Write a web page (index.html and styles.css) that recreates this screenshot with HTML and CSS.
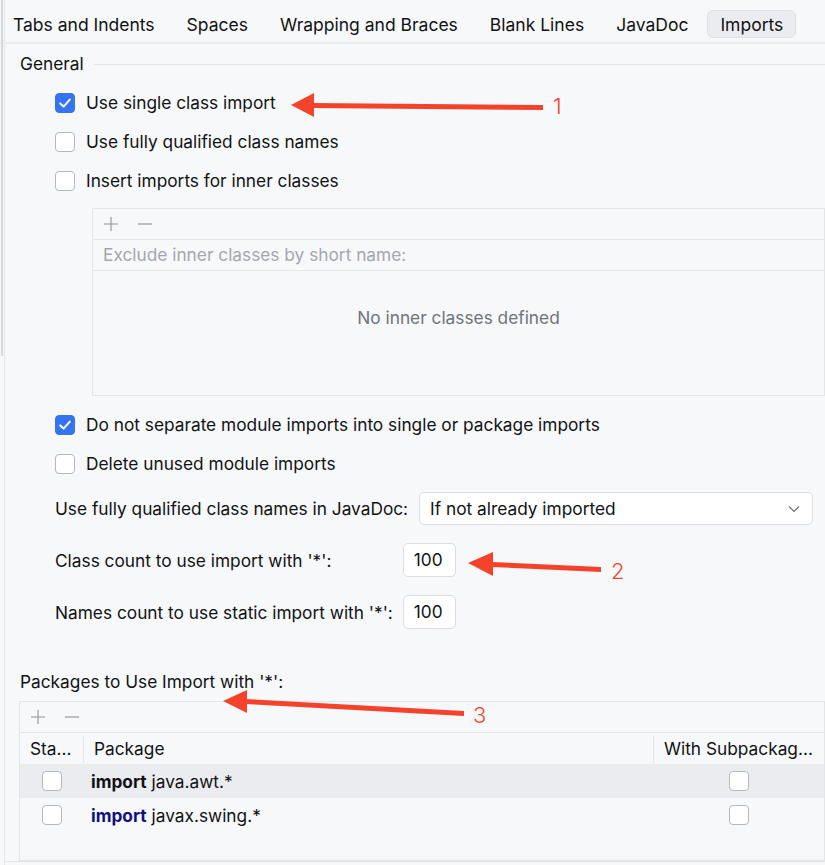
FILE: index.html
```html
<!DOCTYPE html>
<html lang="en">
<head>
<meta charset="utf-8">
<title>Imports</title>
<link rel="stylesheet" href="styles.css">
</head>
<body>
<div class="scroll-thumb"></div>
<div class="frame">
  <nav class="tabs">
    <span class="tab">Tabs and Indents</span>
    <span class="tab">Spaces</span>
    <span class="tab">Wrapping and Braces</span>
    <span class="tab">Blank Lines</span>
    <span class="tab">JavaDoc</span>
    <span class="tab active">Imports</span>
  </nav>
  <main class="panel">
    <div class="group-title"><span>General</span><span class="rule"></span></div>
    <div class="options">
      <div class="check-row"><span class="cb checked"><svg viewBox="0 0 20 20" width="20" height="20"><path d="M5.2 10.4 L8.6 13.6 L14.8 6.6" fill="none" stroke="#fff" stroke-width="2" stroke-linecap="round" stroke-linejoin="round"/></svg></span>Use single class import</div>
      <div class="check-row"><span class="cb"></span>Use fully qualified class names</div>
      <div class="check-row"><span class="cb"></span>Insert imports for inner classes</div>
    </div>
    <div class="list-box inner">
      <div class="toolbar">
        <svg class="tool" viewBox="0 0 16 16" width="16" height="16"><path d="M8 1 V15 M1 8 H15" stroke="#8e9199" stroke-width="1.1" fill="none"/></svg>
        <svg class="tool" viewBox="0 0 16 16" width="16" height="16"><path d="M1 8 H15" stroke="#8e9199" stroke-width="1.1" fill="none"/></svg>
      </div>
      <div class="list-header">Exclude inner classes by short name:</div>
      <div class="empty">No inner classes defined</div>
    </div>
    <div class="options second">
      <div class="check-row"><span class="cb checked"><svg viewBox="0 0 20 20" width="20" height="20"><path d="M5.2 10.4 L8.6 13.6 L14.8 6.6" fill="none" stroke="#fff" stroke-width="2" stroke-linecap="round" stroke-linejoin="round"/></svg></span>Do not separate module imports into single or package imports</div>
      <div class="check-row"><span class="cb"></span>Delete unused module imports</div>
    </div>
    <div class="javadoc-row">
      <span class="label">Use fully qualified class names in JavaDoc:</span>
      <div class="select"><span>If not already imported</span><svg viewBox="0 0 12 8" width="12" height="8"><path d="M1 1.5 L6 6.5 L11 1.5" fill="none" stroke="#6c707e" stroke-width="1.2"/></svg></div>
    </div>
    <div class="counts">
      <span class="label">Class count to use import with '*':</span>
      <div class="num">100</div>
      <span class="label">Names count to use static import with '*':</span>
      <div class="num">100</div>
    </div>
    <div class="section-label">Packages to Use Import with '*':</div>
    <div class="list-box packages">
      <div class="toolbar">
        <svg class="tool" viewBox="0 0 16 16" width="16" height="16"><path d="M8 1 V15 M1 8 H15" stroke="#8e9199" stroke-width="1.1" fill="none"/></svg>
        <svg class="tool" viewBox="0 0 16 16" width="16" height="16"><path d="M1 8 H15" stroke="#8e9199" stroke-width="1.1" fill="none"/></svg>
      </div>
      <div class="table">
        <div class="th first">Sta...</div>
        <div class="th">Package</div>
        <div class="th last">With Subpackag...</div>

        <div class="td center sel"><span class="cb"></span></div>
        <div class="td sel"><b class="kw">import</b>&nbsp;java.awt.*</div>
        <div class="td center sel"><span class="cb"></span></div>

        <div class="td center"><span class="cb"></span></div>
        <div class="td"><b class="kw blue">import</b>&nbsp;javax.swing.*</div>
        <div class="td center"><span class="cb"></span></div>
      </div>
    </div>
  </main>
</div>
<svg class="annotations" viewBox="0 0 825 865" width="825" height="865">
  <g fill="#f5432b" stroke="none">
    <polygon points="291,105 314,93 314,117"/>
    <polygon points="312,103 543,105 543,110 312,108"/>
    <polygon points="468,563 493,552 493,576"/>
    <polygon points="491,562 601,567 601,572 491,567"/>
    <polygon points="223,701 247,690 247,713"/>
    <polygon points="245,699 464,711 464,716 245,704"/>
  </g>
  <g class="ann-text" fill="#f5432b">
    <text x="553" y="114">1</text>
    <text x="611" y="579">2</text>
    <text x="473" y="723">3</text>
  </g>
</svg>
</body>
</html>
```
FILE: styles.css
```css
* { box-sizing: border-box; }

html, body {
  margin: 0;
  padding: 0;
}

body {
  position: relative;
  width: 825px;
  height: 865px;
  overflow: hidden;
  background: #f7f8fa;
  font-family: Inter, "Noto Sans", "Liberation Sans", sans-serif;
  font-size: 17.3px;
  color: #111214;
}

.scroll-thumb {
  position: absolute;
  left: 1px;
  top: 0;
  width: 2px;
  height: 356px;
  background: #d6d8dc;
}

.frame {
  margin-left: 4px;
  border-left: 1px solid #e4e5e8;
  height: 865px;
  display: flex;
  flex-direction: column;
}

/* Tabs */
.tabs {
  display: flex;
  gap: 6px;
  height: 44px;
  padding-top: 10px;
  margin-left: -5px;
  border-bottom: 2px solid #ebecf0;
  font-size: 17.5px;
}

.tab {
  height: 28px;
  line-height: 28px;
  padding: 0 12px;
  border: 1px solid transparent;
  border-radius: 6px;
  white-space: nowrap;
}

.tab.active {
  background: #ebecf0;
  border-color: #dfe1e5;
}

/* Panel */
.panel {
  height: 818px;
  border-bottom: 1px solid #e4e5e8;
  padding-top: 10px;
  padding-left: 15px;
  display: flex;
  flex-direction: column;
}

.group-title {
  display: flex;
  align-items: center;
  gap: 10px;
  height: 20px;
  line-height: 20px;
}

.group-title .rule {
  flex: 1;
  height: 1px;
  background: #e6e7ea;
}

.options {
  margin-top: 9px;
  margin-left: 35px;
}

.options.second {
  margin-top: 9px;
}

.check-row {
  display: flex;
  align-items: center;
  gap: 11px;
  height: 39px;
  white-space: nowrap;
}

.cb {
  display: inline-block;
  width: 20px;
  height: 20px;
  flex: none;
  border: 1px solid #b4b7bd;
  border-radius: 4px;
  background: #ffffff;
}

.cb.checked {
  border-color: #3574f0;
  background: #3574f0;
}

.cb svg {
  display: block;
  margin: -1px;
}

/* list boxes */
.list-box {
  border: 1px solid #e4e5e8;
  display: flex;
  flex-direction: column;
}

.list-box.inner {
  margin-top: 8px;
  margin-left: 72px;
  height: 188px;
}

.toolbar {
  height: 31px;
  flex: none;
  border-bottom: 1px solid #e4e5e8;
  display: flex;
  align-items: center;
  gap: 18px;
  padding-left: 10px;
}

.tool {
  display: block;
}

.list-header {
  height: 31px;
  flex: none;
  line-height: 30px;
  border-bottom: 1px solid #e4e5e8;
  padding-left: 10px;
  color: #a4a7ae;
}

.empty {
  flex: 1;
  text-align: center;
  padding-top: 36px;
  color: #6f737a;
}

/* JavaDoc select */
.javadoc-row {
  margin-top: 9px;
  margin-left: 35px;
  display: flex;
  align-items: center;
  gap: 11px;
  height: 33px;
}

.label {
  white-space: nowrap;
}

.select {
  flex: 1;
  height: 33px;
  margin-right: 12px;
  background: #ffffff;
  border: 1px solid #dcdde1;
  border-radius: 5px;
  display: flex;
  align-items: center;
  justify-content: space-between;
  padding: 0 12px 0 10px;
}

/* counts */
.counts {
  margin-top: 18px;
  margin-left: 35px;
  display: grid;
  grid-template-columns: max-content 53px;
  grid-auto-rows: 34px;
  column-gap: 10px;
  row-gap: 18px;
  align-items: center;
}

.num {
  height: 34px;
  background: #ffffff;
  border: 1px solid #dcdde1;
  border-radius: 5px;
  line-height: 32px;
  padding-left: 10px;
}

.section-label {
  margin-top: 43px;
  height: 20px;
  line-height: 20px;
}

.list-box.packages {
  margin-top: 9px;
  margin-left: -1px;
  flex: 1;
  border-bottom-width: 1px;
}

.table {
  display: grid;
  grid-template-columns: 64px 570px 1fr;
  grid-template-rows: 31px 34px 34px;
}

.th {
  display: flex;
  align-items: center;
  padding-left: 10px;
  white-space: nowrap;
  position: relative;
}

.th.first::after,
.th:nth-child(2)::after {
  content: "";
  position: absolute;
  right: 0;
  top: 3px;
  bottom: 1px;
  width: 1px;
  background: #e4e5e8;
}

.td {
  display: flex;
  align-items: center;
  padding-left: 7px;
  white-space: nowrap;
}

.td.center {
  justify-content: center;
  padding-left: 0;
}

.td.sel {
  background: #ebecf0;
}

.kw {
  font-weight: 700;
}

.kw.blue {
  color: #101080;
}

/* annotations */
.annotations {
  position: absolute;
  left: 0;
  top: 0;
  pointer-events: none;
}

.ann-text text {
  font-family: Inter, "Noto Sans", sans-serif;
  font-size: 22px;
  font-weight: 300;
}
```
